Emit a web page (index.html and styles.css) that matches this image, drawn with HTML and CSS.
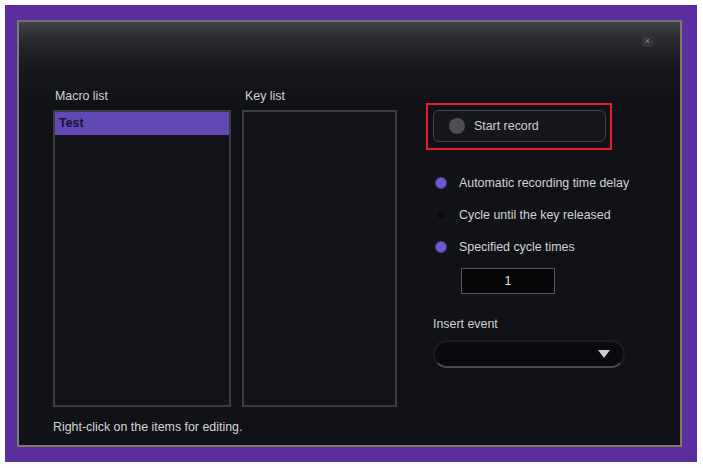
FILE: index.html
```html
<!DOCTYPE html>
<html>
<head>
<meta charset="utf-8">
<link rel="stylesheet" href="styles.css">
</head>
<body>
<div class="frame">
  <div class="window">
    <div class="titlebar">
      <span class="close">×</span>
    </div>
    <div class="content">
      <div class="lists">
        <div class="col macro">
          <div class="label">Macro list</div>
          <div class="listbox">
            <div class="item selected">Test</div>
          </div>
        </div>
        <div class="col keys">
          <div class="label">Key list</div>
          <div class="listbox"></div>
        </div>
        <div class="right">
          <div class="highlight">
            <div class="recbtn"><span class="dot"></span><span>Start record</span></div>
          </div>
          <div class="radios">
            <div class="radio on"><span class="knob"></span>Automatic recording time delay</div>
            <div class="radio"><span class="knob"></span>Cycle until the key released</div>
            <div class="radio on"><span class="knob"></span>Specified cycle times</div>
          </div>
          <div class="count">1</div>
          <div class="label insert">Insert event</div>
          <div class="dropdown"><span class="arrow"></span></div>
        </div>
      </div>
      <div class="footer">Right-click on the items for editing.</div>
    </div>
  </div>
</div>
</body>
</html>
```

FILE: styles.css
```css
html, body {
  margin: 0;
  padding: 0;
  background: #ffffff;
}
body {
  font-family: "Liberation Sans", Arial, sans-serif;
  font-size: 12.4px;
  color: #d4d4d6;
}
.frame {
  margin: 5px 6px 6px 5px;
  width: 692px;
  height: 457px;
  box-sizing: border-box;
  background: #5a2e9f;
  padding: 15px 15px 15px 12px;
}
.window {
  width: 665px;
  height: 427px;
  box-sizing: border-box;
  border: 2px solid #85785f;
  border-top-color: #6f6f72;
  border-left-color: #7a7a78;
  background: linear-gradient(180deg, #424246 0px, #2a2b30 16px, #17181d 48px, #111217 80px, #111217 100%);
  display: flex;
  flex-direction: column;
}
.titlebar {
  height: 66px;
  display: flex;
  justify-content: flex-end;
  align-items: flex-start;
  padding-right: 27px;
  box-sizing: border-box;
  padding-top: 14px;
}
.close {
  width: 11px;
  height: 11px;
  background: #34353a;
  color: #8e8e92;
  font-size: 9px;
  line-height: 11px;
  text-align: center;
  border-radius: 2px;
  filter: blur(0.6px);
}
.content {
  padding-left: 34px;
}
.lists {
  display: flex;
}
.col {
  display: flex;
  flex-direction: column;
}
.label {
  height: 16px;
  line-height: 16px;
  padding-left: 2px;
  color: #d0d0d2;
  margin-bottom: 6px;
}
.macro .listbox {
  width: 178px;
}
.keys {
  margin-left: 11px;
}
.keys .label {
  padding-left: 3px;
}
.keys .listbox {
  width: 155px;
}
.listbox {
  height: 297px;
  box-sizing: border-box;
  border: 2px solid #3c3d42;
  background: #131419;
}
.item {
  height: 23px;
  line-height: 23px;
  padding-left: 4px;
}
.item.selected {
  background: #6148b2;
  color: #16143a;
  font-weight: bold;
}
.right {
  margin-left: 29px;
  margin-top: 15px;
  display: flex;
  flex-direction: column;
  align-items: flex-start;
}
.highlight {
  width: 186px;
  height: 47px;
  box-sizing: border-box;
  border: 2px solid #e3202c;
  padding: 5px 4px 6px 5px;
}
.recbtn {
  height: 32px;
  box-sizing: border-box;
  border: 1px solid #45464c;
  border-radius: 6px;
  background: #16171c;
  display: flex;
  align-items: center;
  padding-left: 15px;
  gap: 9px;
  color: #cfcfd1;
}
.dot {
  width: 16px;
  height: 16px;
  border-radius: 50%;
  background: #4d4e53;
}
.radios {
  margin-top: 17px;
  display: flex;
  flex-direction: column;
}
.radio {
  height: 32px;
  display: flex;
  align-items: center;
  padding-left: 9px;
  color: #d2d2d4;
}
.knob {
  width: 12px;
  height: 12px;
  border-radius: 50%;
  background: #0c0c10;
  border: 1px solid #1c1c22;
  margin-right: 12px;
  box-sizing: border-box;
}
.radio.on .knob {
  background: #6b58d2;
  border-color: #4a3c96;
}
.count {
  margin-top: 5px;
  margin-left: 35px;
  width: 94px;
  height: 26px;
  box-sizing: border-box;
  border: 1px solid #56575c;
  background: #060608;
  text-align: center;
  line-height: 24px;
  color: #e2e2e4;
}
.label.insert {
  margin-top: 22px;
  margin-bottom: 8px;
  padding-left: 7px;
}
.dropdown {
  margin-left: 7px;
  width: 192px;
  height: 28px;
  box-sizing: border-box;
  border: 2px solid #1c1d22;
  border-bottom-color: #4a4b50;
  border-radius: 14px;
  background: #0b0b0e;
  display: flex;
  align-items: center;
  justify-content: flex-end;
  padding-right: 13px;
}
.arrow {
  width: 0;
  height: 0;
  border-left: 6px solid transparent;
  border-right: 6px solid transparent;
  border-top: 8px solid #cfcfd2;
}
.footer {
  margin-top: 12px;
  height: 16px;
  line-height: 16px;
  color: #d4d4d6;
}
```
